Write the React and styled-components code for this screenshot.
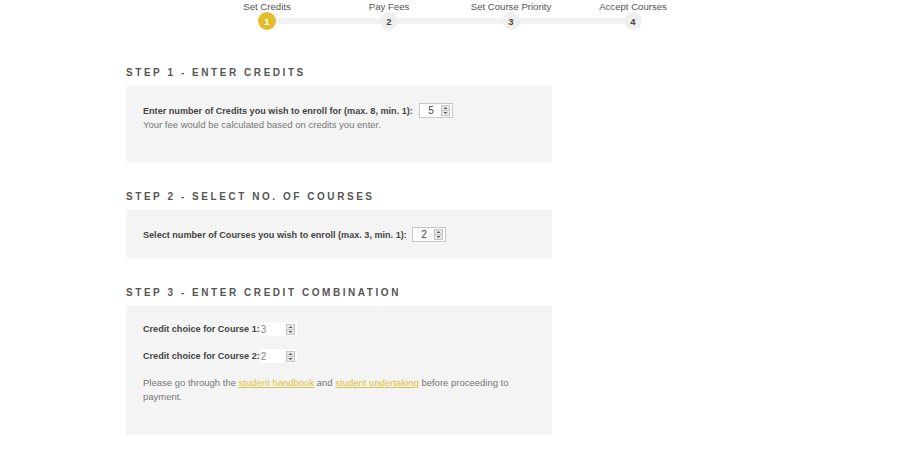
import React from "react";
import styled, { createGlobalStyle } from "styled-components";

const GlobalStyle = createGlobalStyle`
  body {
    margin: 0;
    background: #ffffff;
    font-family: "Liberation Sans", Arial, sans-serif;
  }
`;

const Page = styled.div`
  width: 900px;
  height: 449px;
  overflow: hidden;
`;

const Stepper = styled.ol`
  position: relative;
  display: flex;
  list-style: none;
  margin: 0 0 0 206px;
  padding: 0;
  width: 488px;

  &::before {
    content: "";
    position: absolute;
    left: 61px;
    right: 61px;
    top: 18px;
    height: 6px;
    background: #f2f2f2;
  }
`;

const Step = styled.li`
  width: 122px;
  display: flex;
  flex-direction: column;
  align-items: center;
`;

const StepLabel = styled.span`
  font-size: 9.6px;
  line-height: 13px;
  color: #555;
  white-space: nowrap;
`;

const StepDot = styled.span`
  position: relative;
  z-index: 1;
  margin-top: -1px;
  width: 18px;
  height: 18px;
  border-radius: 50%;
  display: flex;
  align-items: center;
  justify-content: center;
  font-size: 9.5px;
  font-weight: bold;
  background: ${(p) => (p.$active ? "#e3bd2d" : "#efefef")};
  color: ${(p) => (p.$active ? "#ffffff" : "#444")};
`;

const Content = styled.div`
  margin: 36px 0 0 126px;
  width: 426px;
`;

const StepTitle = styled.h2`
  margin: ${(p) => (p.$first ? "0" : "28px")} 0 6px;
  font-size: 10px;
  line-height: 14px;
  font-weight: bold;
  letter-spacing: 2.55px;
  color: #555;
`;

const Panel = styled.div`
  background: #f4f4f4;
  padding: ${(p) => p.$pad};
`;

const Row = styled.div`
  display: flex;
  align-items: center;
  height: ${(p) => p.$h || 15}px;
  margin-top: ${(p) => p.$mt || 0}px;
`;

const Label = styled.span`
  font-size: 9.1px;
  font-weight: bold;
  color: #444;
  margin-right: ${(p) => p.$gap ?? 5}px;
  white-space: nowrap;
`;

const Note = styled.p`
  margin: ${(p) => p.$mt || 0}px 0 0;
  font-size: 9.5px;
  line-height: 14px;
  color: #777;
`;

const Link = styled.a`
  color: #e0c03c;
  text-decoration: underline;
`;

const NumberBox = styled.span`
  box-sizing: border-box;
  display: inline-flex;
  align-items: center;
  justify-content: flex-end;
  width: ${(p) => p.$w}px;
  height: 15px;
  background: #fff;
  border: 1px solid #c8c8c8;
  padding-right: 2px;
  font-size: 10px;
  color: #444;
`;

const NumberValue = styled.span`
  margin-right: 7px;
`;

const PlainBox = styled.span`
  box-sizing: border-box;
  display: inline-flex;
  align-items: center;
  justify-content: space-between;
  width: 37px;
  height: 14px;
  background: #fff;
  padding: 0 2px 0 1px;
  font-size: 10px;
  color: #888;
`;

const Spin = () => (
  <svg width="9" height="11" viewBox="0 0 9 11">
    <rect x="0.5" y="0.5" width="8" height="10" fill="#e9e9e9" stroke="#c4c4c4" />
    <line x1="1" y1="5.5" x2="8" y2="5.5" stroke="#c4c4c4" />
    <path d="M2.5 4 L4.5 2 L6.5 4 Z" fill="#555" />
    <path d="M2.5 7 L4.5 9 L6.5 7 Z" fill="#555" />
  </svg>
);

const steps = ["Set Credits", "Pay Fees", "Set Course Priority", "Accept Courses"];

export default function App() {
  return (
    <Page>
      <GlobalStyle />
      <Stepper>
        {steps.map((s, i) => (
          <Step key={s}>
            <StepLabel>{s}</StepLabel>
            <StepDot $active={i === 0}>{i + 1}</StepDot>
          </Step>
        ))}
      </Stepper>

      <Content>
        <StepTitle $first>STEP 1 - ENTER CREDITS</StepTitle>
        <Panel $pad="17px 17px 30px">
          <Row>
            <Label $gap={6}>Enter number of Credits you wish to enroll for (max. 8, min. 1):</Label>
            <NumberBox $w={34}>
              <NumberValue>5</NumberValue>
              <Spin />
            </NumberBox>
          </Row>
          <Note>Your fee would be calculated based on credits you enter.</Note>
        </Panel>

        <StepTitle>STEP 2 - SELECT NO. OF COURSES</StepTitle>
        <Panel $pad="17px 17px 16px">
          <Row>
            <Label>Select number of Courses you wish to enroll (max. 3, min. 1):</Label>
            <NumberBox $w={34}>
              <NumberValue>2</NumberValue>
              <Spin />
            </NumberBox>
          </Row>
        </Panel>

        <StepTitle>STEP 3 - ENTER CREDIT COMBINATION</StepTitle>
        <Panel $pad="16px 17px 31px">
          <Row $h={14}>
            <Label $gap={0}>Credit choice for Course 1:</Label>
            <PlainBox>
              3
              <Spin />
            </PlainBox>
          </Row>
          <Row $h={14} $mt={13}>
            <Label $gap={0}>Credit choice for Course 2:</Label>
            <PlainBox>
              2
              <Spin />
            </PlainBox>
          </Row>
          <Note $mt={13}>
            Please go through the <Link href="#">student handbook</Link> and{" "}
            <Link href="#">student undertaking</Link> before proceeding to payment.
          </Note>
        </Panel>
      </Content>
    </Page>
  );
}
